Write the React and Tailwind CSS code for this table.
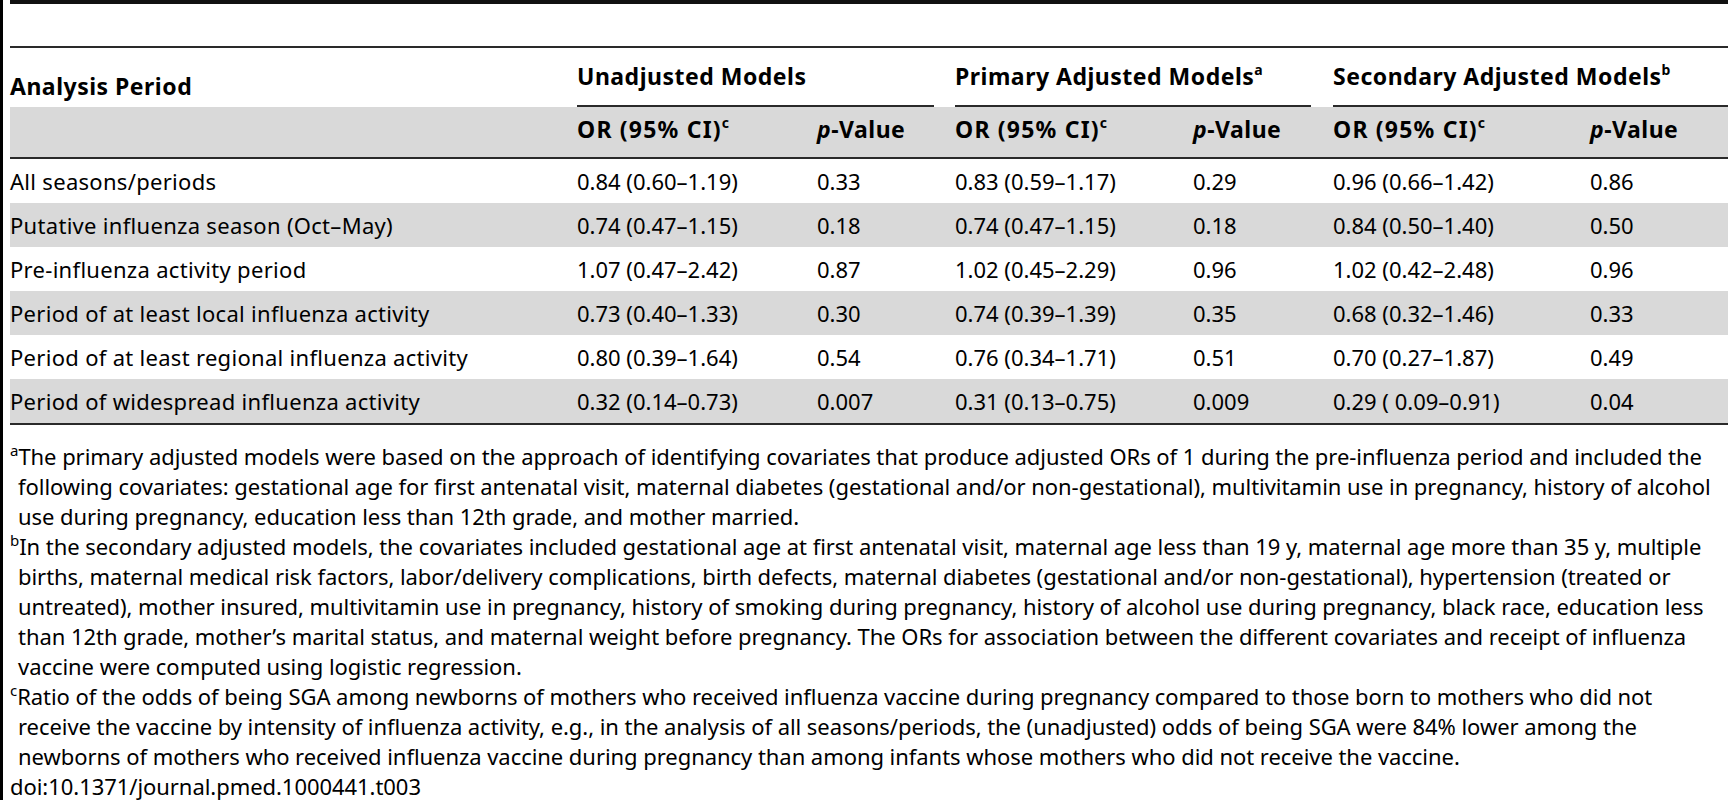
const rows = [
  ['All seasons/periods', '0.84 (0.60–1.19)', '0.33', '0.83 (0.59–1.17)', '0.29', '0.96 (0.66–1.42)', '0.86'],
  ['Putative influenza season (Oct–May)', '0.74 (0.47–1.15)', '0.18', '0.74 (0.47–1.15)', '0.18', '0.84 (0.50–1.40)', '0.50'],
  ['Pre-influenza activity period', '1.07 (0.47–2.42)', '0.87', '1.02 (0.45–2.29)', '0.96', '1.02 (0.42–2.48)', '0.96'],
  ['Period of at least local influenza activity', '0.73 (0.40–1.33)', '0.30', '0.74 (0.39–1.39)', '0.35', '0.68 (0.32–1.46)', '0.33'],
  ['Period of at least regional influenza activity', '0.80 (0.39–1.64)', '0.54', '0.76 (0.34–1.71)', '0.51', '0.70 (0.27–1.87)', '0.49'],
  ['Period of widespread influenza activity', '0.32 (0.14–0.73)', '0.007', '0.31 (0.13–0.75)', '0.009', '0.29 ( 0.09–0.91)', '0.04'],
]

const notes = [
  {
    mark: 'a',
    lines: [
      'The primary adjusted models were based on the approach of identifying covariates that produce adjusted ORs of 1 during the pre-influenza period and included the',
      'following covariates: gestational age for first antenatal visit, maternal diabetes (gestational and/or non-gestational), multivitamin use in pregnancy, history of alcohol',
      'use during pregnancy, education less than 12th grade, and mother married.',
    ],
  },
  {
    mark: 'b',
    lines: [
      'In the secondary adjusted models, the covariates included gestational age at first antenatal visit, maternal age less than 19 y, maternal age more than 35 y, multiple',
      'births, maternal medical risk factors, labor/delivery complications, birth defects, maternal diabetes (gestational and/or non-gestational), hypertension (treated or',
      'untreated), mother insured, multivitamin use in pregnancy, history of smoking during pregnancy, history of alcohol use during pregnancy, black race, education less',
      'than 12th grade, mother’s marital status, and maternal weight before pregnancy. The ORs for association between the different covariates and receipt of influenza',
      'vaccine were computed using logistic regression.',
    ],
  },
  {
    mark: 'c',
    lines: [
      'Ratio of the odds of being SGA among newborns of mothers who received influenza vaccine during pregnancy compared to those born to mothers who did not',
      'receive the vaccine by intensity of influenza activity, e.g., in the analysis of all seasons/periods, the (unadjusted) odds of being SGA were 84% lower among the',
      'newborns of mothers who received influenza vaccine during pregnancy than among infants whose mothers who did not receive the vaccine.',
    ],
  },
]

const cols = 'grid grid-cols-[567px_240px_138px_238px_140px_257px_138px]'

function Sup({ children }) {
  return <sup className="text-[14px] font-bold tracking-normal relative -top-[10px]">{children}</sup>
}

function SubHead() {
  return (
    <>
      <div className="tracking-[1.2px]">OR (95% CI)<Sup>c</Sup></div>
      <div className="tracking-[0.5px]"><i>p</i>-Value</div>
    </>
  )
}

export default function App() {
  return (
    <div className="w-[1728px] min-h-[800px] bg-white border-l-[3px] border-black pl-[7px] text-black text-[22px] font-['Noto_Sans',sans-serif]">
      <div className="h-[46px] border-t-[4px] border-[#111]" />
      <div className="h-[2px] bg-[#2a2a2a]" />

      {/* group header */}
      <div className={`${cols} h-[59px] font-bold text-[23px] tracking-[0.5px]`}>
        <div className="pt-[21px]">Analysis Period</div>
        <div className="col-span-2 flex flex-col justify-between">
          <div className="pt-[11px]">Unadjusted Models</div>
          <div className="h-[2px] bg-[#2a2a2a] mr-[21px]" />
        </div>
        <div className="col-span-2 flex flex-col justify-between">
          <div className="pt-[11px]">Primary Adjusted Models<Sup>a</Sup></div>
          <div className="h-[2px] bg-[#2a2a2a] mr-[22px]" />
        </div>
        <div className="col-span-2 flex flex-col justify-between">
          <div className="pt-[11px]">Secondary Adjusted Models<Sup>b</Sup></div>
          <div className="h-[2px] bg-[#2a2a2a]" />
        </div>
      </div>

      {/* sub header */}
      <div className={`${cols} h-[52px] bg-[#d9d9d9] font-bold text-[23px] items-center pb-[6px] border-b-[2px] border-[#2a2a2a]`}>
        <div />
        <SubHead />
        <SubHead />
        <SubHead />
      </div>

      {rows.map((r, i) => (
        <div key={i} className={`${cols} h-[44px] items-center ${i % 2 ? 'bg-[#d9d9d9]' : ''}`}>
          {r.map((c, j) => (
            <div key={j} className={`whitespace-pre ${j === 0 ? 'tracking-[0.3px]' : ''}`}>
              {c}
            </div>
          ))}
        </div>
      ))}
      <div className="h-[2px] bg-[#2a2a2a]" />

      <div className="pt-[16px] leading-[30px] tracking-[-0.05px]">
        {notes.map(n => (
          <div key={n.mark}>
            {n.lines.map((l, k) => (
              <div key={k} className="whitespace-nowrap pl-[8px]">
                {k === 0 && <sup className="text-[15px] -ml-[8px] relative -top-[9px]">{n.mark}</sup>}
                {l}
              </div>
            ))}
          </div>
        ))}
        <div>doi:10.1371/journal.pmed.1000441.t003</div>
      </div>
    </div>
  )
}
